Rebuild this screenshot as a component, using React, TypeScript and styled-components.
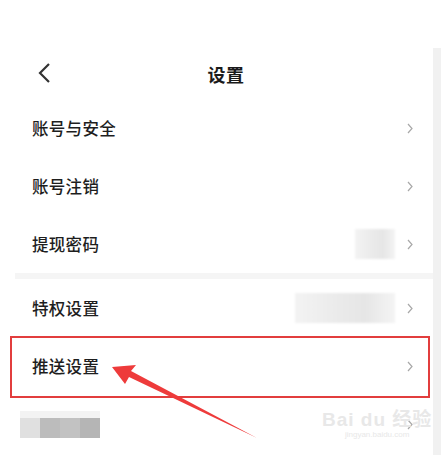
import styled, { createGlobalStyle } from 'styled-components'

const GlobalStyle = createGlobalStyle`
  html, body {
    margin: 0;
    padding: 0;
    background: #ffffff;
  }
  body {
    font-family: 'Noto Sans CJK SC', 'Noto Sans', sans-serif;
    color: #222;
  }
`

const Page = styled.div`
  position: relative;
  width: 441px;
  height: 455px;
  overflow: hidden;
  background: #fff;
`

const TopSpace = styled.div`
  height: 48px;
`

const Screen = styled.div`
  display: flex;
  padding-left: 15px;
`

const Main = styled.div`
  flex: 1;
  display: flex;
  flex-direction: column;
`

const ScrollStrip = styled.div`
  width: 8px;
  background: #f1f1f1;
  align-self: stretch;
  min-height: 407px;
`

const Header = styled.header`
  height: 51px;
  display: flex;
  align-items: center;
  justify-content: center;
  position: relative;
`

const BackButton = styled.div`
  position: absolute;
  left: 22px;
  top: 14px;
  width: 16px;
  height: 22px;
  display: flex;
`

const Title = styled.h1`
  margin: 0 0 0 4px;
  font-size: 18px;
  font-weight: 700;
  color: #1a1a1a;
  letter-spacing: 0.5px;
`

const Group = styled.div`
  display: flex;
  flex-direction: column;
`

const Separator = styled.div`
  height: 6px;
  background: #f5f5f5;
`

const Row = styled.div`
  height: 58px;
  display: flex;
  align-items: center;
  padding: 0 20px 0 17px;
  gap: 12px;
`

const Label = styled.span`
  flex: 1;
  font-size: 16.5px;
  font-weight: 500;
  color: #1e1e1e;
  letter-spacing: 0.3px;
`

const Blur = styled.div<{ $w: number }>`
  width: ${(p) => p.$w}px;
  height: 30px;
  background: linear-gradient(90deg, #f3f3f3, #ebebeb 40%, #e6e6e6 70%, #f4f4f4);
  filter: blur(1px);
`

const BlurLabel = styled.div`
  flex: 1;
  display: flex;
  align-items: flex-end;
  height: 28px;
  margin-left: -12px;
`

const BlurCell = styled.div<{ $c: string }>`
  width: 20px;
  height: 20px;
  background: ${(p) => p.$c};
  box-shadow: 0 -7px 0 #f3f3f3;
`

const Spacer = styled.div`
  flex: 1;
`

const Chevron = styled.svg`
  width: 6px;
  height: 11px;
  flex: none;
`

const HighlightBox = styled.div`
  position: absolute;
  left: 10px;
  top: 336px;
  width: 416px;
  height: 58px;
  border: 2.5px solid #e23d3d;
`

const Arrow = styled.svg`
  position: absolute;
  left: 100px;
  top: 355px;
  width: 170px;
  height: 95px;
  overflow: visible;
`

const Watermark = styled.div`
  position: absolute;
  left: 322px;
  top: 410px;
  display: flex;
  flex-direction: column;
  align-items: center;
  color: #e8e8e8;
  font-family: 'Liberation Sans', 'Noto Sans CJK SC', sans-serif;
`

const WatermarkMain = styled.span`
  font-size: 19px;
  font-weight: 700;
  line-height: 20px;
  letter-spacing: 1px;
`

const WatermarkSub = styled.span`
  font-size: 8px;
  line-height: 10px;
`

function RowChevron() {
  return (
    <Chevron viewBox="0 0 6 11">
      <path d="M1 1 L5 5.5 L1 10" fill="none" stroke="#a8a8a8" strokeWidth="1.2" />
    </Chevron>
  )
}

export default function App() {
  return (
    <Page>
      <GlobalStyle />
      <TopSpace />
      <Screen>
        <Main>
          <Header>
            <BackButton>
              <svg width="16" height="22" viewBox="0 0 16 22">
                <path d="M12 2 L3 11 L12 20" fill="none" stroke="#333" strokeWidth="2.2" />
              </svg>
            </BackButton>
            <Title>设置</Title>
          </Header>
          <Group>
            <Row>
              <Label>账号与安全</Label>
              <RowChevron />
            </Row>
            <Row>
              <Label>账号注销</Label>
              <RowChevron />
            </Row>
            <Row>
              <Label>提现密码</Label>
              <Blur $w={40} />
              <RowChevron />
            </Row>
          </Group>
          <Separator />
          <Group>
            <Row>
              <Label>特权设置</Label>
              <Blur $w={100} />
              <RowChevron />
            </Row>
            <Row>
              <Label>推送设置</Label>
              <RowChevron />
            </Row>
            <Row>
              <BlurLabel>
                <BlurCell $c="#e0e0e0" />
                <BlurCell $c="#bcbcbc" />
                <BlurCell $c="#c2c2c2" />
                <BlurCell $c="#b5b5b5" />
                <Spacer />
              </BlurLabel>
              <RowChevron />
            </Row>
          </Group>
        </Main>
        <ScrollStrip />
      </Screen>

      <HighlightBox />
      <Arrow viewBox="0 0 170 95">
        <path
          d="M12 12 L36 10 L31 16 L157 83 L29 22 L25 29 Z"
          fill="#ee3b3b"
        />
      </Arrow>
      <Watermark>
        <WatermarkMain>Bai du 经验</WatermarkMain>
        <WatermarkSub>jingyan.baidu.com</WatermarkSub>
      </Watermark>
    </Page>
  )
}
